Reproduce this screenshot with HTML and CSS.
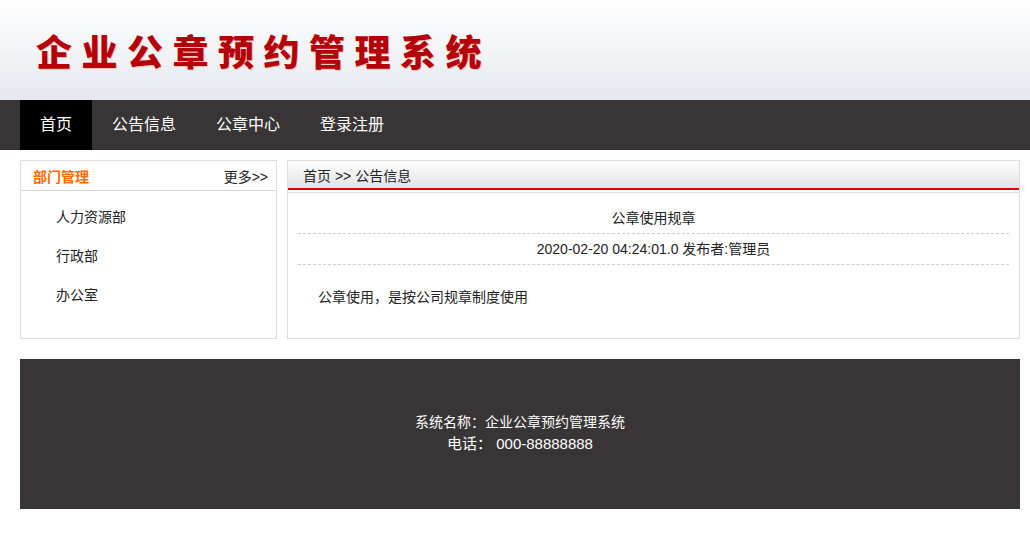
FILE: index.html
```html
<!DOCTYPE html>
<html lang="zh-CN">
<head>
    <meta charset="UTF-8">
    <title>企业公章预约管理系统</title>
    <link rel="stylesheet" href="styles.css">
</head>
<body>

    <div class="header">
        <h1 class="logo">企业公章预约管理系统</h1>
    </div>

    <div class="nav">
        <a class="nav-item active" href="#">首页</a>
        <a class="nav-item" href="#">公告信息</a>
        <a class="nav-item" href="#">公章中心</a>
        <a class="nav-item" href="#">登录注册</a>
    </div>

    <div class="main">
        <!-- 左侧：部门 -->
        <div class="side-box">
            <div class="side-title">
                <span class="side-name">部门管理</span>
                <a class="more" href="#">更多&gt;&gt;</a>
            </div>
            <ul class="side-list">
                <li><a href="#">人力资源部</a></li>
                <li><a href="#">行政部</a></li>
                <li><a href="#">办公室</a></li>
            </ul>
        </div>

        <!-- 右侧：公告详情 -->
        <div class="content-box">
            <div class="crumb">首页 &gt;&gt; 公告信息</div>
            <div class="article">
                <div class="art-title">公章使用规章</div>
                <div class="art-info">2020-02-20 04:24:01.0 发布者:管理员</div>
                <div class="art-body">公章使用，是按公司规章制度使用</div>
            </div>
        </div>
    </div>

    <div class="footer">
        <p>系统名称：企业公章预约管理系统</p>
        <p class="tel">电话： 000-88888888</p>
    </div>

</body>
</html>
```

FILE: styles.css
```css
/* 全局 */
body {
    margin: 0;
    font-family: "Liberation Sans", "Noto Sans CJK SC", sans-serif;
    font-size: 14px;
    color: #222;
    background: #fff;
}

a {
    text-decoration: none;
    color: inherit;
}

/* 顶部标题 */
.header {
    height: 100px;
    background: linear-gradient(to bottom, #ffffff, #e6e8ee);
    display: flex;
    align-items: center;
}

.logo {
    margin: 0 0 0 36px;
    font-family: "Noto Sans CJK SC", sans-serif;
    font-size: 36px;
    font-weight: 900;
    letter-spacing: 9.5px;
    color: #b5000c;
    text-shadow: 1px 1px 0 rgba(220, 150, 90, 0.45);
    line-height: 1;
}

/* 导航 */
.nav {
    height: 50px;
    background-color: #393435;
    display: flex;
    padding-left: 20px;
}

.nav-item {
    display: block;
    padding: 0 20px;
    line-height: 50px;
    font-size: 16px;
    color: #fff;
}

.nav-item.active {
    background-color: #000;
}

/* 主体 */
.main {
    display: flex;
    gap: 10px;
    margin: 10px 10px 20px 20px;
}

.side-box {
    width: 255px;
    height: 177px;
    border: 1px solid #ddd;
}

.side-title {
    height: 29px;
    border-bottom: 1px solid #d4d4d4;
    display: flex;
    justify-content: space-between;
    align-items: center;
    padding: 0 8px 0 12px;
}

.side-name {
    color: #ff6a00;
    font-weight: bold;
}

.more {
    color: #222;
}

.side-list {
    list-style: none;
    margin: 0;
    padding: 7px 0 0 35px;
}

.side-list li {
    line-height: 39px;
}

.content-box {
    flex: 1;
    height: 177px;
    border: 1px solid #ddd;
}

.crumb {
    height: 27px;
    line-height: 30px;
    padding-left: 15px;
    background: linear-gradient(to bottom, #ffffff, #e2e2e2);
    border-bottom: 2px solid #e0000b;
    box-shadow: 0 2px 0 #fff, 0 3px 0 #ddd;
}

.article {
    padding: 13px 10px 0 10px;
}

.art-title,
.art-info {
    text-align: center;
    line-height: 30px;
    border-bottom: 1px dashed #ccc;
}

.art-body {
    padding: 20px 20px 0 20px;
    line-height: 24px;
}

/* 底部 */
.footer {
    margin: 0 10px 0 20px;
    height: 150px;
    background-color: #393435;
    color: #fff;
    display: flex;
    flex-direction: column;
    justify-content: center;
    align-items: center;
    padding-bottom: 2px;
    box-sizing: border-box;
}

.footer p {
    margin: 0;
    line-height: 21px;
}

.footer .tel {
    font-size: 15px;
}
```
